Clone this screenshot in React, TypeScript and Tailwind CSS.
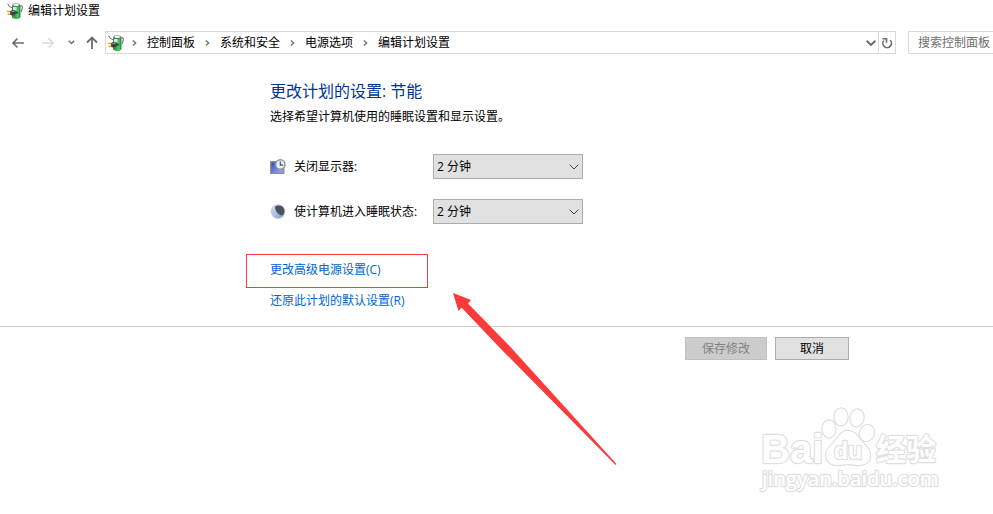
import React from 'react';

const FONT = 'font-["Open_Sans","Noto_Sans_CJK_SC",sans-serif]';

const crumbs = ['控制面板', '系统和安全', '电源选项', '编辑计划设置'];

function PowerIcon() {
  return (
    <svg width="16" height="16" viewBox="0 0 16 16" fill="none" className="shrink-0" aria-hidden="true">
      <path d="M12.500 3c1.800-1 3.200 0 2.800 2.200L14 9" stroke="#747d84" strokeWidth="1.200" />
      <path d="M5 3h8.500v10.500c0 1.500-1.900 2.300-4.200 2.300S5 15 5 13.700z" fill="#2f9446" />
      <path d="M8.500 4h3.500v11c-1 .4-2.700.5-3.500.3z" fill="#46bd5c" />
      <path d="M6 4h3.500v3.500H6z" fill="#c4f3c9" />
      <path d="M5.200 2.600C5.200.900 7 .200 9.200.200s4 .8 4 2.100-1.800 1.700-4 1.700-4-.2-4-1.400z" fill="#667177" />
      <ellipse cx="9.200" cy="1.900" rx="2.900" ry="1.100" fill="#f1f5f6" />
      <path d="M.8.800 2 3.200l3 1.600" stroke="#68747c" strokeWidth="1" />
      <path d="M0 8.500h3.200M.6 11.300h3.200" stroke="#e0ab20" strokeWidth="1.500" />
      <path d="M3 8.200 4.800 7l3 .4 1.600 1.200 1.800 1-.3 1-2 .2-1.400 1.200-2.500.4L3.300 12z" fill="#3d4145" />
      <path d="M4.300 8.800 5.800 8.200l1.800.5" stroke="#a4aaaf" strokeWidth="1" />
    </svg>
  );
}

function DisplayIcon() {
  return (
    <svg width="16" height="16" viewBox="0 0 16 16" fill="none" aria-hidden="true">
      <defs>
        <linearGradient id="screen" x1="0" y1="0" x2="1" y2="1">
          <stop stopColor="#2947c8" />
          <stop offset="1" stopColor="#9bb6ff" />
        </linearGradient>
      </defs>
      <rect x=".7" y="2.700" width="13" height="11.600" fill="url(#screen)" stroke="#8d8d91" strokeWidth="1.400" />
      <circle cx="10.300" cy="5.500" r="4.700" fill="#e9f1f8" stroke="#8f969c" strokeWidth="1.500" />
      <path d="M10.300 2.500v3.600h2.900" stroke="#38536c" strokeWidth="1.200" />
    </svg>
  );
}

function SleepIcon() {
  return (
    <svg width="16" height="16" viewBox="0 0 16 16" aria-hidden="true">
      <defs>
        <linearGradient id="moon" x1="0" y1="0" x2="1" y2="1">
          <stop stopColor="#cfdceb" />
          <stop offset=".5" stopColor="#a9c3e3" />
          <stop offset="1" stopColor="#6f9bd8" />
        </linearGradient>
      </defs>
      <circle cx="8" cy="7.500" r="7.500" fill="#d3dae2" />
      <circle cx="8" cy="7.500" r="6.700" fill="url(#moon)" />
      <path d="M5 2.700C7.500.700 11.500.900 13.400 3.800c1.600 2.600 1.100 5.800-.9 7.800C8.800 11 5.200 8 5 2.700z" fill="#4c525c" />
    </svg>
  );
}

function Chevron({ dir = 'right' }: { dir?: 'right' | 'down' }) {
  return dir === 'right' ? (
    <svg width="5" height="8" viewBox="0 0 5 8" fill="none" stroke="#6d6d6d" strokeWidth="1.300" aria-hidden="true">
      <path d="M.8 1.500 3.700 4 .8 6.500" />
    </svg>
  ) : (
    <svg width="10" height="6" viewBox="0 0 10 6" fill="none" stroke="currentColor" aria-hidden="true">
      <path d="M.7.700 5 5 9.300.7" />
    </svg>
  );
}

function DelayRow({ id, label, icon }: { id: string; label: string; icon: React.ReactNode }) {
  return (
    <div className="flex items-center">
      {icon}
      <label htmlFor={id} className="ml-2 w-[139px]">{label}</label>
      <div className="relative">
        <select
          id={id}
          defaultValue="2"
          className="block h-[25px] w-[150px] appearance-none border border-[#adadad] bg-[#e1e1e1] pl-[3px] text-xs text-black"
        >
          <option value="1">1 分钟</option>
          <option value="2">2 分钟</option>
          <option value="5">5 分钟</option>
          <option value="0">从不</option>
        </select>
        <span className="pointer-events-none absolute inset-y-0 right-1 flex items-center text-[#444]">
          <Chevron dir="down" />
        </span>
      </div>
    </div>
  );
}

function Watermark() {
  return (
    <svg
      width="190"
      height="96"
      viewBox="0 0 190 96"
      fill="#fff"
      stroke="#dfdfdf"
      strokeWidth="2.400"
      strokeLinejoin="round"
      className="pointer-events-none absolute top-[402px] right-[46px] [paint-order:stroke]"
      aria-hidden="true"
    >
      <g className='font-["Liberation_Sans","Noto_Sans_CJK_SC",sans-serif] font-bold'>
        <text x="4" y="61" fontSize="40">Bai</text>
        <ellipse cx="72" cy="27" rx="6.500" ry="8.500" />
        <ellipse cx="84" cy="15" rx="6.500" ry="8.500" />
        <ellipse cx="100" cy="16" rx="6.500" ry="8.500" transform="rotate(10 100 16)" />
        <ellipse cx="110" cy="31" rx="7" ry="8" transform="rotate(20 110 31)" />
        <path d="M91 29c7 0 10 6 14 11 5 5 9 9 8 15-1 7-7 8-12 8-4 0-6-1-10-1s-7 1-11 1c-6 0-11-4-11-10 0-5 4-9 8-13 5-5 7-11 14-11z" />
        <text x="77" y="57" fontSize="23">du</text>
        <text x="119" y="58" fontSize="30">经验</text>
      </g>
      <text x="5" y="84" fontSize="20" className='font-["Open_Sans",sans-serif] font-semibold'>jingyan.baidu.com</text>
    </svg>
  );
}

export default function App() {
  return (
    <div className={`relative min-h-screen overflow-hidden bg-white text-xs text-black ${FONT}`}>
      <header className="flex h-[22px] items-center gap-[5px] pl-[7px]">
        <PowerIcon />
        <h1>编辑计划设置</h1>
      </header>

      <div className="flex items-center py-[9px]">
        <div className="flex w-[105px] items-center pl-3 text-[#6d6d6d]">
          <button type="button" aria-label="后退">
            <svg width="12" height="12" viewBox="0 0 12 12" fill="none" stroke="currentColor" strokeWidth="1.600">
              <path d="M12 6H1M5.500 1.500 1 6l4.500 4.500" />
            </svg>
          </button>
          <button type="button" aria-label="前进" disabled className="ml-[18px] text-[#d9d9d9]">
            <svg width="12" height="12" viewBox="0 0 12 12" fill="none" stroke="currentColor" strokeWidth="1.600">
              <path d="M0 6h11M6.500 1.500 11 6l-4.500 4.500" />
            </svg>
          </button>
          <button type="button" aria-label="最近位置" className="ml-[14px]">
            <svg width="7" height="5" viewBox="0 0 7 5" fill="none" stroke="currentColor" strokeWidth="1.500">
              <path d="M.8.800 3.500 3.500 6.200.8" />
            </svg>
          </button>
          <button type="button" aria-label="上移" className="ml-[11px]">
            <svg width="12" height="13" viewBox="0 0 12 13" fill="none" stroke="currentColor" strokeWidth="1.800">
              <path d="M6 13V1.500M1 6.500l5-5 5 5" />
            </svg>
          </button>
        </div>

        <div className="flex h-[23px] flex-1 items-center border border-[#d9d9d9] pl-0.5">
          <PowerIcon />
          <nav aria-label="地址" className="ml-2 flex-1">
            <ol className="flex items-center gap-[10px]">
              {crumbs.map((name) => (
                <li key={name} className="flex items-center gap-[10px]">
                  <Chevron />
                  <a href="#" className="whitespace-nowrap">{name}</a>
                </li>
              ))}
            </ol>
          </nav>
          <button type="button" aria-label="展开地址" className="mr-0.5 text-[#6d6d6d] [&_path]:stroke-2">
            <Chevron dir="down" />
          </button>
          <button type="button" aria-label="刷新" className="flex h-full w-[17px] items-center justify-center border-l border-[#d9d9d9] text-[#6d6d6d]">
            <svg width="12" height="12" viewBox="0 0 12 12" fill="none" stroke="currentColor" strokeWidth="1.600">
              <path d="M9.200 3.200A4.300 4.300 0 1 1 2.800 3.600" />
              <path d="M1.500 1.700h4v4" />
            </svg>
          </button>
        </div>

        <input
          type="text"
          aria-label="搜索控制面板"
          placeholder="搜索控制面板"
          className="ml-3 h-[23px] w-[85px] border border-r-0 border-[#d9d9d9] pl-[9px] placeholder:text-[#6d6d6d]"
        />
      </div>

      <main>
        <section className="pt-4 pl-[270px]">
          <h2 className="text-base leading-6 text-[#003399]">更改计划的设置: 节能</h2>
          <p className="mt-1 leading-5">选择希望计算机使用的睡眠设置和显示设置。</p>

          <div className="mt-[27px] flex flex-col gap-5">
            <DelayRow id="display" label="关闭显示器:" icon={<DisplayIcon />} />
            <DelayRow id="sleep" label="使计算机进入睡眠状态:" icon={<SleepIcon />} />
          </div>

          <div className="mt-9 flex flex-col items-start gap-[11px] leading-5 text-[#0066cc]">
            <div className="relative">
              <a href="#">更改高级电源设置(C)</a>
              <span className="pointer-events-none absolute -top-1.5 -left-6 h-[34px] w-[182px] border border-[#fb3a3a]" />
              <svg width="166" height="174" viewBox="0 0 166 174" className="pointer-events-none absolute top-8 left-[182px]" aria-hidden="true">
                <path d="M1 1l18 7-3 3.500L58 54.500 164.500 172l-1 1L47 55 10.500 16.500 9 16l-2.500 3z" fill="#fb3a3a" />
              </svg>
            </div>
            <a href="#">还原此计划的默认设置(R)</a>
          </div>
        </section>

        <div className="mt-[15px] flex justify-end gap-2 border-t border-[#ccc] pt-[10px] pr-36">
          <button type="button" disabled className="h-[23px] w-[82px] border border-[#bfbfbf] bg-[#ccc] text-[#838383]">
            保存修改
          </button>
          <button type="button" className="h-[23px] w-[74px] border border-[#adadad] bg-[#e1e1e1]">
            取消
          </button>
        </div>
      </main>

      <Watermark />
    </div>
  );
}
